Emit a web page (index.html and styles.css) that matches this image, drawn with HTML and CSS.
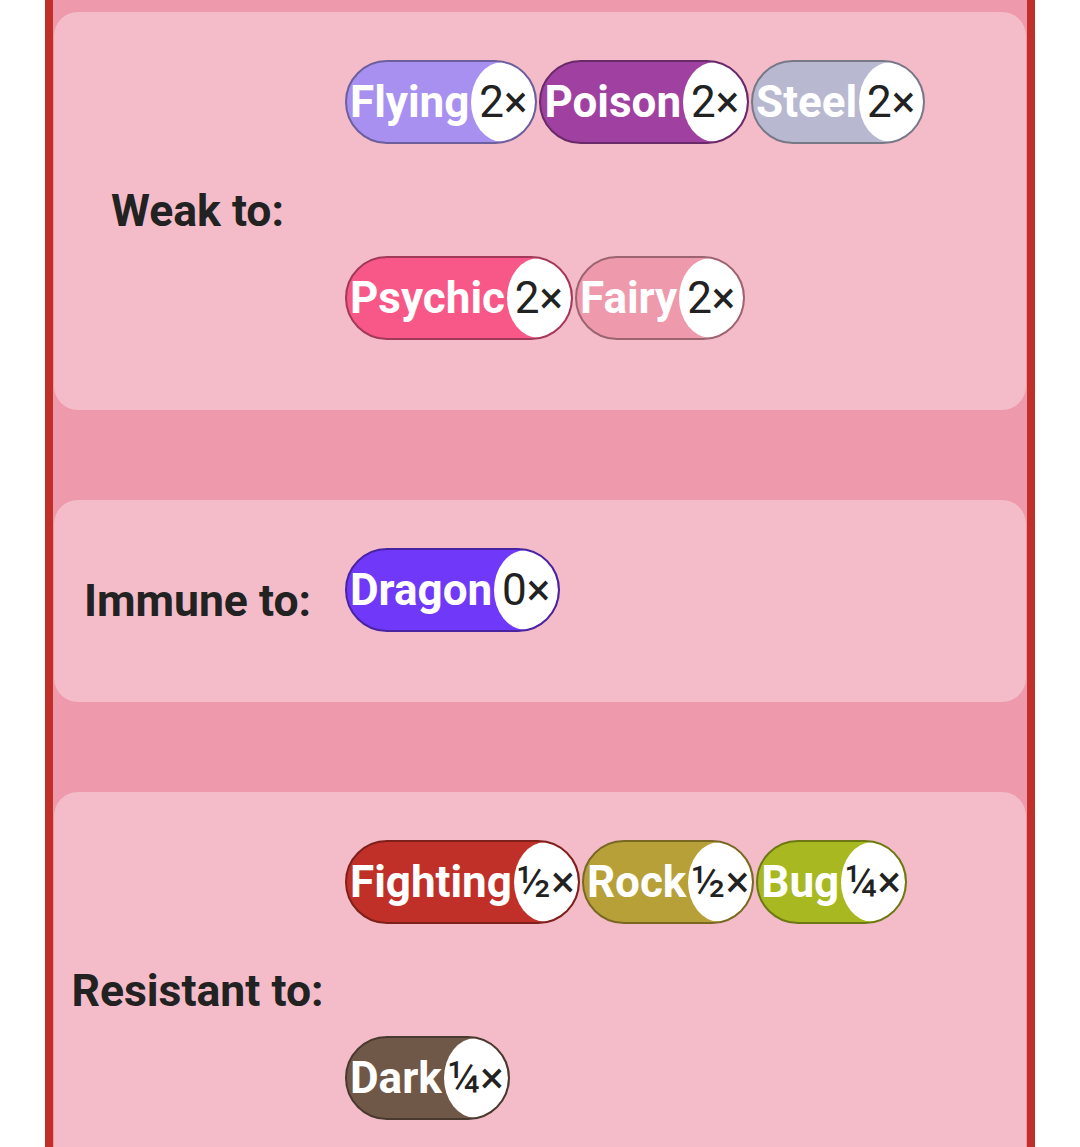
FILE: index.html
```html
<!DOCTYPE html>
<html lang="en">
<head>
    <meta charset="UTF-8">
    <meta name="viewport" content="width=device-width, initial-scale=1.0">
    <title>Type Matchups</title>
    <link rel="stylesheet" href="styles.css">
</head>
<body>
    <div class="matchups">
        <div class="card">
            <div class="label">Weak to:</div>
            <div class="types">
                <span class="type flying"><span class="name">Flying</span><span class="mult">2×</span></span>
                <span class="type poison"><span class="name">Poison</span><span class="mult">2×</span></span>
                <span class="type steel"><span class="name">Steel</span><span class="mult">2×</span></span>
                <span class="type psychic"><span class="name">Psychic</span><span class="mult">2×</span></span>
                <span class="type fairy"><span class="name">Fairy</span><span class="mult">2×</span></span>
            </div>
        </div>
        <div class="card">
            <div class="label">Immune to:</div>
            <div class="types">
                <span class="type dragon"><span class="name">Dragon</span><span class="mult">0×</span></span>
            </div>
        </div>
        <div class="card">
            <div class="label">Resistant to:</div>
            <div class="types">
                <span class="type fighting"><span class="name">Fighting</span><span class="mult">½×</span></span>
                <span class="type rock"><span class="name">Rock</span><span class="mult">½×</span></span>
                <span class="type bug"><span class="name">Bug</span><span class="mult">¼×</span></span>
                <span class="type dark"><span class="name">Dark</span><span class="mult">¼×</span></span>
            </div>
        </div>
    </div>
</body>
</html>
```

FILE: styles.css
```css
body {
    margin: 0;
    background-color: #ffffff;
    font-family: Roboto, "Noto Sans", sans-serif;
}
.matchups {
    width: 974px;
    margin: 0 auto;
    padding: 12px 0;
    border: 8px solid #c03028;
    border-top: none;
    background-color: #ee99ac;
    display: flex;
    flex-direction: column;
    gap: 90px;
}
.card {
    margin: 0 1px;
    border-radius: 24px;
    background-color: rgba(255, 255, 255, 0.35);
    display: flex;
    align-items: center;
}
.label {
    flex: none;
    width: 287px;
    text-align: center;
    font-size: 44.5px;
    font-weight: bold;
    color: #222222;
}
.types {
    flex: 1;
    display: flex;
    flex-wrap: wrap;
    column-gap: 2px;
    row-gap: 112px;
    padding: 48px 0 70px 4px;
}
.type {
    display: inline-flex;
    align-items: stretch;
    height: 84px;
    box-sizing: border-box;
    border: 2px solid;
    border-radius: 42px;
    overflow: hidden;
}
.name {
    display: flex;
    align-items: center;
    padding: 0 2px 0 3px;
    font-size: 44px;
    font-weight: bold;
    color: #ffffff;
}
.mult {
    display: flex;
    align-items: center;
    justify-content: center;
    width: 64px;
    border-radius: 50%;
    background-color: #ffffff;
    font-size: 44px;
    color: #222222;
    white-space: nowrap;
}
.flying { background-color: #a890f0; border-color: #6d5e9c; }
.poison { background-color: #a040a0; border-color: #682a68; }
.steel { background-color: #b8b8d0; border-color: #787887; }
.psychic { background-color: #f85888; border-color: #a13959; }
.fairy { background-color: #ee99ac; border-color: #9b6470; }
.dragon { background-color: #7038f8; border-color: #4924a1; }
.fighting { background-color: #c03028; border-color: #7d1f1a; }
.rock { background-color: #b8a038; border-color: #786824; }
.bug { background-color: #a8b820; border-color: #6d7815; }
.dark { background-color: #705848; border-color: #49392f; }
```
